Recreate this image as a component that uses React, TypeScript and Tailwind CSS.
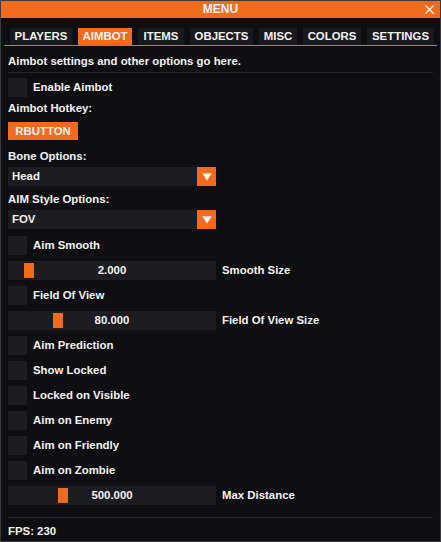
import React from "react";

const ORANGE = "bg-[#f26b1d]";

const tabs = [
    { name: "PLAYERS", w: "w-[62px]" },
    { name: "AIMBOT", w: "w-[54px]" },
    { name: "ITEMS", w: "w-[46px]" },
    { name: "OBJECTS", w: "w-[63px]" },
    { name: "MISC", w: "w-[38px]" },
    { name: "COLORS", w: "w-[58px]" },
    { name: "SETTINGS", w: "w-[67px]" },
];

const Checkbox = ({ label, className = "" }: { label: string; className?: string }) => (
    <div className={`flex items-center h-[19px] ${className}`}>
        <div className="w-[19px] h-[19px] bg-[#1c1c21]" />
        <span className="ml-[6px]">{label}</span>
    </div>
);

const Slider = ({ value, offset, label, className = "" }: { value: string; offset: number; label: string; className?: string }) => (
    <div className={`flex items-center h-[19px] ${className}`}>
        <div className="relative w-[208px] h-[19px] bg-[#1c1c21] flex items-center justify-center">
            <div className={`absolute top-[2px] w-[10px] h-[15px] ${ORANGE}`} style={{ left: offset }} />
            <span className="relative">{value}</span>
        </div>
        <span className="ml-[6px]">{label}</span>
    </div>
);

const Dropdown = ({ value, className = "" }: { value: string; className?: string }) => (
    <div className={`flex h-[19px] w-[208px] ${className}`}>
        <div className="flex-1 bg-[#1c1c21] flex items-center pl-[4px]">{value}</div>
        <div className={`w-[19px] h-[19px] ${ORANGE} flex items-center justify-center`}>
            <svg width="10" height="8" viewBox="0 0 10 8">
                <polygon points="0.5,0.5 9.5,0.5 5,7.5" fill="#ffffff" />
                <rect x="0.5" y="0.5" width="9" height="1.2" fill="#ffd9c2" />
            </svg>
        </div>
    </div>
);

export default function App() {
    return (
        <div
            className="w-[441px] h-[542px] bg-[#0f0f11] border border-[#3a3a3e] flex flex-col text-[11.4px] font-bold text-[#f2f2f2] leading-[13px]"
            style={{ fontFamily: '"Liberation Sans", Arial, sans-serif' }}
        >
            {/* Title bar */}
            <div className={`relative h-[17px] ${ORANGE} flex items-center justify-center text-[12px]`}>
                <span>MENU</span>
                <svg className="absolute right-[6px] top-[4px]" width="9" height="9" viewBox="0 0 9 9">
                    <path d="M0.5 0.5 L8.5 8.5 M8.5 0.5 L0.5 8.5" stroke="#ffffff" strokeWidth="1.2" />
                </svg>
            </div>

            {/* Tabs */}
            <div className="mt-[10px] mx-[3px] border-b border-[#f26b1d] flex gap-[6px] pl-[6px]">
                {tabs.map((t) => (
                    <div
                        key={t.name}
                        className={`${t.w} h-[17px] flex items-center justify-center ${t.name === "AIMBOT" ? ORANGE : "bg-[#1a1a1e]"}`}
                    >
                        {t.name}
                    </div>
                ))}
            </div>

            {/* Content */}
            <div className="flex flex-col px-[7px]">
                <div className="mt-[9px]">Aimbot settings and other options go here.</div>
                <div className="mt-[4px] h-px bg-[#26262a]" />

                <Checkbox label="Enable Aimbot" className="mt-[5px]" />
                <div className="mt-[5px]">Aimbot Hotkey:</div>
                <div className={`mt-[7px] w-[70px] h-[18px] ${ORANGE} flex items-center justify-center`}>RBUTTON</div>
                <div className="mt-[10px]">Bone Options:</div>
                <Dropdown value="Head" className="mt-[4px]" />
                <div className="mt-[7px]">AIM Style Options:</div>
                <Dropdown value="FOV" className="mt-[4px]" />

                <Checkbox label="Aim Smooth" className="mt-[7px]" />
                <Slider value="2.000" offset={16} label="Smooth Size" className="mt-[6px]" />
                <Checkbox label="Field Of View" className="mt-[6px]" />
                <Slider value="80.000" offset={45} label="Field Of View Size" className="mt-[6px]" />
                <Checkbox label="Aim Prediction" className="mt-[6px]" />
                <Checkbox label="Show Locked" className="mt-[6px]" />
                <Checkbox label="Locked on Visible" className="mt-[6px]" />
                <Checkbox label="Aim on Enemy" className="mt-[6px]" />
                <Checkbox label="Aim on Friendly" className="mt-[6px]" />
                <Checkbox label="Aim on Zombie" className="mt-[6px]" />
                <Slider value="500.000" offset={50} label="Max Distance" className="mt-[6px]" />

                <div className="mt-[12px] h-px bg-[#26262a]" />
                <div className="mt-[7px]">FPS: 230</div>
            </div>
        </div>
    );
}
